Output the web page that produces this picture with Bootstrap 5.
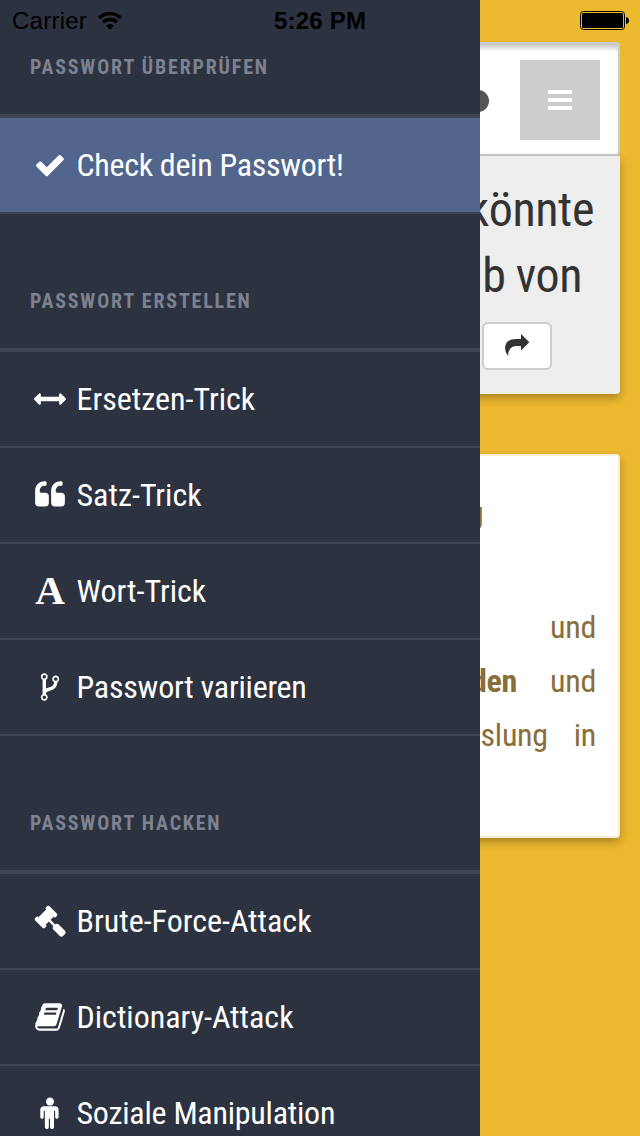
<!DOCTYPE html>
<html lang="de">
<head>
<meta charset="utf-8">
<meta name="viewport" content="width=device-width, initial-scale=1">
<title>Passwort-Check</title>
<link href="https://cdn.jsdelivr.net/npm/bootstrap@5.3.0/dist/css/bootstrap.min.css" rel="stylesheet">
<style>
body{background:#edb92e;font-family:"Roboto Condensed",Roboto,sans-serif;font-stretch:75%;font-size:32px}
.screen{width:640px;height:1136px}
.status{height:40px;color:#000;font:24px/40px "Liberation Sans",Arial,sans-serif;z-index:3;padding:1px 11px 0 12px}
.carrier{letter-spacing:.25px}
.status-time{font-weight:700;left:274px;top:1px;letter-spacing:.2px}
.drawer{width:480px;background:#2d3240;z-index:2}
.drawer-nav{margin-top:-20px}
.group-title{height:138px;padding:34px 30px 0;border-bottom:4px solid #404552;color:#7d8190;font-size:20px;font-weight:700;letter-spacing:1.8px;line-height:106px}
.entry{height:96px;border-bottom:2px solid #404552;color:#fff;padding-left:34px;gap:10.5px}
.entry.active{background:#52658c}
.entry svg{width:32px;height:32px;fill:#fff;flex:none}
.entry .serif-a{width:32px;font:700 41px/1 "Liberation Serif",serif;text-align:center;margin-top:-2px}
.cond{display:inline-block;white-space:nowrap}
.entry .cond.tight{letter-spacing:-.24px}
.entry.active .cond.tight{letter-spacing:-.3px}
.page{width:600px;padding-top:42px}
.topbar{height:114px;background:#fff;border:2px solid #ccc;border-left:0;border-radius:4px;box-shadow:inset 0 6px 6px -3px #bbb;padding:2px 18px 0 0;gap:31px}
.knob{width:22px;height:22px;background:#555;margin-top:2px}
.menu-btn{width:80px;height:80px;background:#ccc;gap:4px}
.menu-btn i{width:24px;height:4px;border-radius:1px;background:#fff}
.hero{height:238px;background:#eee;color:#333;border-radius:0 0 4px 4px;box-shadow:0 4px 10px rgba(0,0,0,.3);font-size:48px;line-height:66px;padding-top:21px;letter-spacing:-.4px;word-spacing:-.5px}
.line-one{margin-right:26px}
.line-two{margin-right:38px}
.share{width:70px;height:48px;background:#fff;border:2px solid #ccc;border-radius:6px;margin:13px 68px 0 0}
.tip{height:384px;margin-top:60px;background:#fff;border:2px solid #fbeed5;border-radius:4px;box-shadow:0 4px 10px rgba(0,0,0,.3);color:#8a6d3b;line-height:54px;padding:30px 22px 0 0;letter-spacing:-.3px}
.tip-head{margin-right:113px}
.tip-text{margin-top:60px}
.gap-wide{gap:33px}
.gap-mid{gap:26px}
</style>
</head>
<body>
<div class="screen position-relative overflow-hidden">
  <header class="status position-absolute top-0 start-0 w-100 d-flex align-items-center">
    <span class="carrier">Carrier</span>
    <svg class="ms-2" width="30" height="24" viewBox="0 0 30 24"><g fill="none" stroke="#000" stroke-width="3.4"><path d="M4 9a16 16 0 0 1 22 0M8 13.300a10 10 0 0 1 14 0"/></g><path d="M11 16.700q4-3.200 8 0l-4 4z"/></svg>
    <span class="status-time position-absolute">5:26 PM</span>
    <svg class="ms-auto" width="49" height="20" viewBox="0 0 49 20"><rect x=".5" y=".5" width="44" height="18" rx="3" fill="none" stroke="#000"/><rect x="2" y="2" width="41" height="15" rx="1.5"/><path d="M46 6q3 .5 3 3.500t-3 3.500z"/></svg>
  </header>

  <nav class="drawer position-absolute top-0 start-0 h-100 overflow-hidden">
    <div class="drawer-nav">
      <div class="group-title"><span class="cond">PASSWORT ÜBERPRÜFEN</span></div>
      <a class="entry active d-flex align-items-center text-decoration-none" href="#"><svg viewBox="0 0 1792 1792"><path d="M1671 566q0 40-28 68l-724 724-136 136q-28 28-68 28t-68-28l-136-136-362-362q-28-28-28-68t28-68l136-136q28-28 68-28t68 28l294 295 656-657q28-28 68-28t68 28l136 136q28 28 28 68z"/></svg><span class="cond tight">Check dein Passwort!</span></a>
      <div class="group-title"><span class="cond">PASSWORT ERSTELLEN</span></div>
      <a class="entry d-flex align-items-center text-decoration-none" href="#"><svg viewBox="0 0 1792 1792"><path d="M1792 896q0 26-19 45l-256 256q-19 19-45 19t-45-19-19-45v-128h-1024v128q0 26-19 45t-45 19-45-19l-256-256q-19-19-19-45t19-45l256-256q19-19 45-19t45 19 19 45v128h1024v-128q0-26 19-45t45-19 45 19l256 256q19 19 19 45z"/></svg><span class="cond">Ersetzen-Trick</span></a>
      <a class="entry d-flex align-items-center text-decoration-none" href="#"><svg viewBox="0 0 1792 1792"><path d="M832 960v384q0 80-56 136t-136 56h-384q-80 0-136-56t-56-136v-704q0-104 40.500-198.500t109.500-163.500 163.500-109.500 198.500-40.500h64q26 0 45 19t19 45v128q0 26-19 45t-45 19h-64q-106 0-181 75t-75 181v32q0 40 28 68t68 28h224q80 0 136 56t56 136zm896 0v384q0 80-56 136t-136 56h-384q-80 0-136-56t-56-136v-704q0-104 40.500-198.500t109.500-163.500 163.500-109.500 198.500-40.500h64q26 0 45 19t19 45v128q0 26-19 45t-45 19h-64q-106 0-181 75t-75 181v32q0 40 28 68t68 28h224q80 0 136 56t56 136z"/></svg><span class="cond">Satz-Trick</span></a>
      <a class="entry d-flex align-items-center text-decoration-none" href="#"><span class="serif-a">A</span><span class="cond">Wort-Trick</span></a>
      <a class="entry d-flex align-items-center text-decoration-none" href="#"><svg viewBox="0 0 1792 1792"><path d="M672 1472q0-40-28-68t-68-28-68 28-28 68 28 68 68 28 68-28 28-68zm0-1152q0-40-28-68t-68-28-68 28-28 68 28 68 68 28 68-28 28-68zm640 128q0-40-28-68t-68-28-68 28-28 68 28 68 68 28 68-28 28-68zm96 0q0 52-26 96.500t-70 69.500q-2 287-226 414-67 38-203 81-128 40-169.500 71t-41.500 100v26q44 25 70 69.500t26 96.500q0 80-56 136t-136 56-136-56-56-136q0-52 26-96.500t70-69.500v-820q-44-25-70-69.500t-26-96.500q0-80 56-136t136-56 136 56 56 136q0 52-26 96.500t-70 69.500v497q54-26 154-57 55-17 87.500-29.500t70.500-31 59-39.500 40.500-51 28-69.500 8.500-91.500q-44-25-70-69.500t-26-96.500q0-80 56-136t136-56 136 56 56 136z"/></svg><span class="cond tight">Passwort variieren</span></a>
      <div class="group-title"><span class="cond">PASSWORT HACKEN</span></div>
      <a class="entry d-flex align-items-center text-decoration-none" href="#"><svg viewBox="0 0 1792 1792"><path d="M1771 1536q0 53-37 90l-107 108q-39 37-91 37-53 0-90-37l-363-364q-38-36-38-90 0-53 43-96l-256-256-126 126q-14 14-34 14t-34-14q2 2 12.500 12t12.500 13 10 11.500 10 13.500 6 13.500 5.500 16.500 1.500 18q0 38-28 68-3 3-16.500 18t-19 20.500-18.500 16.500-22 15.500-22 9-26 4.500q-40 0-68-28l-408-408q-28-28-28-68 0-13 4.500-26t9-22 15.500-22 16.500-18.500 20.500-19 18-16.500q30-28 68-28 10 0 18 1.500t16.500 5.500 13.500 6 13.500 10 11.500 10 13 12.500 12 12.500q-14-14-14-34t14-34l348-348q14-14 34-14t34 14q-2-2-12.500-12t-12.500-13-10-11.500-10-13.500-6-13.500-5.500-16.500-1.500-18q0-38 28-68 3-3 16.500-18t19-20.500 18.500-16.500 22-15.500 22-9 26-4.500q40 0 68 28l408 408q28 28 28 68 0 13-4.500 26t-9 22-15.500 22-16.500 18.500-20.500 19-18 16.500q-30 28-68 28-10 0-18-1.500t-16.500-5.500-13.500-6-13.500-10-11.500-10-13-12.500-12-12.500q14 14 14 34t-14 34l-126 126 256 256q43-43 96-43 52 0 91 37l363 363q37 39 37 91z"/></svg><span class="cond">Brute-Force-Attack</span></a>
      <a class="entry d-flex align-items-center text-decoration-none" href="#"><svg viewBox="0 0 1792 1792"><path d="M1703 478q40 57 18 129l-275 906q-19 64-76.500 107.500t-122.500 43.500h-923q-77 0-148.500-53.500t-99.500-131.500q-24-67-2-127 0-4 3-27t4-37q1-8-3-21.500t-3-19.500q2-11 8-21t16.500-23.500 16.500-23.500q23-38 45-91.500t30-91.500q3-10 .5-30t-.5-28q3-11 17-28t17-23q21-36 42-92t25-90q1-9-2.500-32t.5-28q4-13 22-30.500t22-22.500q19-26 42.500-84.500t27.500-96.500q1-8-3-25.500t-2-26.500q2-8 9-18t18-23 17-21q8-12 16.500-30.500t15-35 16-36 19.500-32 26.500-23.500 36-11.500 47.500 5.500l-1 3q38-9 51-9h761q74 0 114 56t18 130l-274 906q-36 119-71.500 153.500t-128.500 34.500h-869q-27 0-38 15-11 16-1 43 24 70 144 70h923q29 0 56-15.500t35-41.500l300-987q7-22 5-57 38 15 59 43zm-1064 2q-4 13 2 22.500t20 9.500h608q13 0 25.500-9.500t16.500-22.500l21-64q4-13-2-22.500t-20-9.500h-608q-13 0-25.500 9.500t-16.500 22.500zm-83 256q-4 13 2 22.500t20 9.500h608q13 0 25.500-9.500t16.500-22.500l21-64q4-13-2-22.500t-20-9.500h-608q-13 0-25.500 9.500t-16.500 22.500z"/></svg><span class="cond">Dictionary-Attack</span></a>
      <a class="entry d-flex align-items-center text-decoration-none" href="#"><svg viewBox="-96 0 1792 1792"><path d="M1280 704v416q0 40-28 68t-68 28-68-28-28-68v-352h-64v912q0 46-33 79t-79 33-79-33-33-79v-464h-64v464q0 46-33 79t-79 33-79-33-33-79v-912h-64v352q0 40-28 68t-68 28-68-28-28-68v-416q0-80 56-136t136-56h640q80 0 136 56t56 136zm-256-448q0 93-65.500 158.500t-158.500 65.500-158.500-65.500-65.500-158.500 65.500-158.500 158.500-65.500 158.500 65.500 65.500 158.500z"/></svg><span class="cond tight">Soziale Manipulation</span></a>
    </div>
  </nav>

  <main class="page mx-auto">
    <div class="topbar d-flex align-items-center justify-content-end">
      <span class="knob rounded-circle"></span>
      <div class="menu-btn d-flex flex-column align-items-center justify-content-center"><i></i><i></i><i></i></div>
    </div>
    <section class="hero d-flex flex-column align-items-end">
      <div class="line-one"><span class="cond">könnte</span></div>
      <div class="line-two"><span class="cond">b von</span></div>
      <div class="share d-flex align-items-center justify-content-center"><svg width="26" height="24" viewBox="0 0 26 24" fill="#333"><path d="M17 0l8.300 8.300L17 16.500v-4.500h-5Q4.500 12 4 22 1 18 1 14 1.500 5 12 5h5z"/></svg></div>
    </section>
    <section class="tip d-flex flex-column align-items-end">
      <div class="tip-head"><strong class="cond">g</strong></div>
      <div class="tip-text"><span class="cond">und</span></div>
      <div class="d-flex gap-wide"><strong class="cond">den</strong><span class="cond">und</span></div>
      <div class="d-flex gap-mid"><span class="cond">slung</span><span class="cond">in</span></div>
    </section>
  </main>
</div>
<script src="https://cdn.jsdelivr.net/npm/bootstrap@5.3.0/dist/js/bootstrap.bundle.min.js"></script>
</body>
</html>
